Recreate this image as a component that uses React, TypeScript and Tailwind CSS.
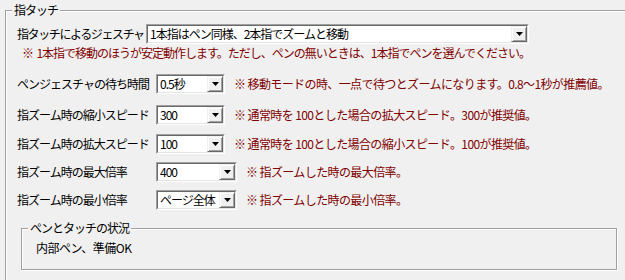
import React from "react";

const font = { fontFamily: '"Noto Sans CJK JP", "Noto Sans", sans-serif' };

function Combo({ value, w }: { value: string; w: string }) {
  return (
    <div className={`${w} shrink-0 h-[20px] flex border border-t-[#a0a0a0] border-l-[#a0a0a0] border-b-white border-r-white`}>
      <div className="flex-1 flex border border-t-[#696969] border-l-[#696969] border-b-[#e3e3e3] border-r-[#e3e3e3] bg-white">
        <div className="flex-1 pl-[2px] text-[12px] leading-[16px] tracking-[-1px] text-black whitespace-nowrap overflow-hidden">
          {value}
        </div>
        <div className="w-[16px] h-[16px] bg-[#f0f0f0] border border-t-[#f0f0f0] border-l-[#f0f0f0] border-b-[#696969] border-r-[#696969] flex items-center justify-center shadow-[inset_1px_1px_0_white,inset_-1px_-1px_0_#a0a0a0]">
          <svg width="7" height="4" viewBox="0 0 7 4">
            <polygon points="0,0 7,0 3.5,4" fill="#000" />
          </svg>
        </div>
      </div>
    </div>
  );
}

function Row({ label, value, w, note, mt, gap }: { label: string; value: string; w: string; note: string; mt: string; gap: string }) {
  return (
    <div className={`flex items-center h-[20px] ${mt}`}>
      <div className="w-[150px] shrink-0 pl-[11px] text-[12px] tracking-[-1px] whitespace-nowrap text-black">{label}</div>
      <Combo value={value} w={w} />
      <div className={`${gap} text-[12px] tracking-[-0.6px] whitespace-nowrap text-[#800000]`}>{note}</div>
    </div>
  );
}

export default function App() {
  return (
    <div className="w-[625px] h-[280px] bg-[#f0f0f0] overflow-hidden" style={font}>
      <div className="pt-[10px] pl-[5px]">
        <div className="relative border-t border-l border-[#a0a0a0] shadow-[inset_1px_1px_0_white] h-[290px] pt-[13px]">
          <div className="absolute left-[6px] top-[-8px] bg-[#f0f0f0] px-[2px] text-[12px] leading-[14px] tracking-[-1px] text-black">指タッチ</div>
          <div className="flex items-center h-[20px]">
            <div className="w-[140px] shrink-0 pl-[11px] text-[12px] tracking-[-1.4px] whitespace-nowrap text-black">指タッチによるジェスチャ</div>
            <Combo value="1本指はペン同様、2本指でズームと移動" w="w-[383px]" />
          </div>
          <div className="mt-[2px] pl-[16px] h-[14px] text-[12px] leading-[14px] tracking-[-1px] whitespace-nowrap text-[#800000]">
            ※&nbsp; 1本指で移動のほうが安定動作します。ただし、ペンの無いときは、1本指でペンを選んでください。
          </div>
          <Row mt="mt-[14px]" label="ペンジェスチャの待ち時間" value="0.5秒" w="w-[69px]" gap="ml-[9px]" note="※ 移動モードの時、一点で待つとズームになります。0.8～1秒が推薦値。" />
          <Row mt="mt-[11px]" label="指ズーム時の縮小スピード" value="300" w="w-[69px]" gap="ml-[9px]" note="※ 通常時を 100とした場合の拡大スピード。300が推奨値。" />
          <Row mt="mt-[9px]" label="指ズーム時の拡大スピード" value="100" w="w-[69px]" gap="ml-[9px]" note="※ 通常時を 100とした場合の縮小スピード。100が推奨値。" />
          <Row mt="mt-[8px]" label="指ズーム時の最大倍率" value="400" w="w-[81px]" gap="ml-[9px]" note="※ 指ズームした時の最大倍率。" />
          <Row mt="mt-[8px]" label="指ズーム時の最小倍率" value="ページ全体" w="w-[81px]" gap="ml-[9px]" note="※ 指ズームした時の最小倍率。" />
          <div className="ml-[15px] mt-[18px] w-[596px] h-[42px] relative border border-[#a0a0a0] shadow-[1px_1px_0_white,inset_1px_1px_0_white]">
            <div className="absolute left-[6px] top-[-8px] bg-[#f0f0f0] px-[2px] text-[12px] leading-[14px] tracking-[-1px] text-black">ペンとタッチの状況</div>
            <div className="pl-[14px] pt-[12px] text-[12px] leading-[14px] tracking-[-0.5px] text-black">内部ペン、準備OK</div>
          </div>
        </div>
      </div>
    </div>
  );
}
